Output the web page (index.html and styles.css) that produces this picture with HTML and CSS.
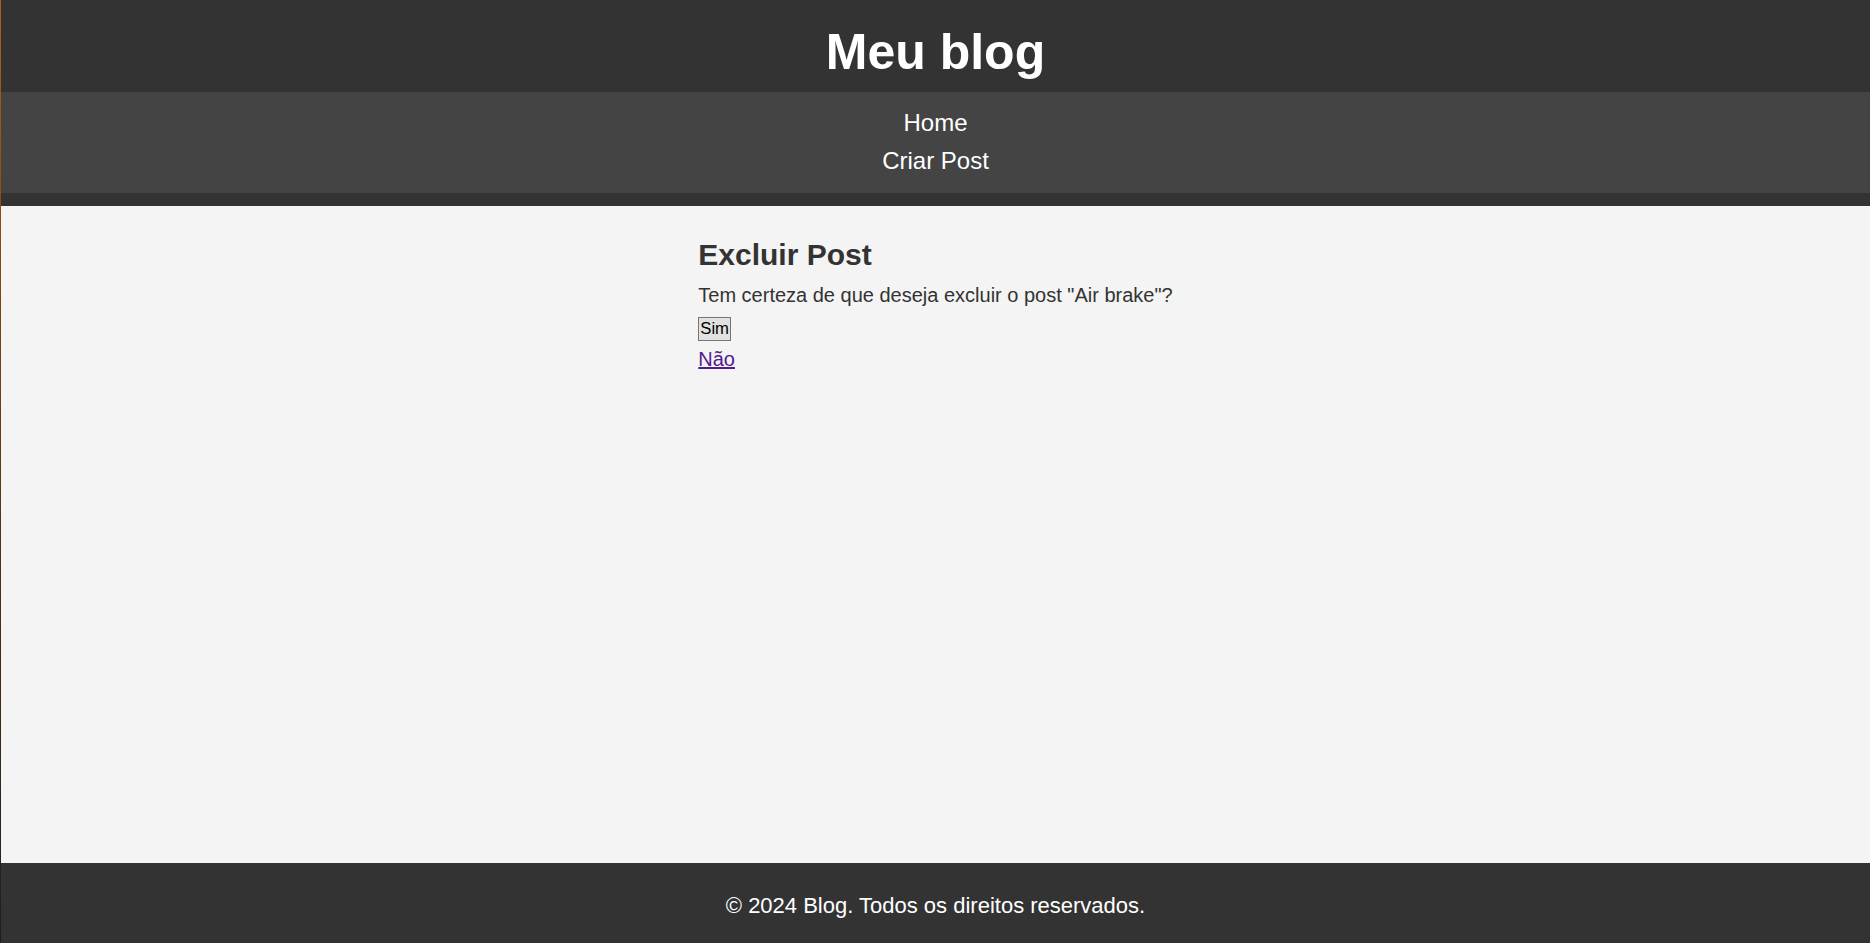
FILE: index.html
```html
<!DOCTYPE html>
<html lang="pt-BR">
<head>
<meta charset="utf-8">
<title>Meu blog</title>
<link rel="stylesheet" href="styles.css">
</head>
<body>
<header class="site-header">
  <h1 class="site-title">Meu blog</h1>
  <nav class="site-nav">
    <ul class="nav-list">
      <li class="nav-item"><a class="nav-link" href="#">Home</a></li>
      <li class="nav-item"><a class="nav-link" href="#">Criar Post</a></li>
    </ul>
  </nav>
</header>
<main class="site-main">
  <div class="content">
    <h2 class="page-title">Excluir Post</h2>
    <p class="confirm-text">Tem certeza de que deseja excluir o post "Air brake"?</p>
    <form class="confirm-form">
      <button class="btn-sim" type="button">Sim</button>
    </form>
    <div class="cancel-row"><a class="cancel-link" href="#">Não</a></div>
  </div>
</main>
<footer class="site-footer">
  <p class="footer-text">© 2024 Blog. Todos os direitos reservados.</p>
</footer>
</body>
</html>
```
FILE: styles.css
```css
html, body {
  margin: 0;
  padding: 0;
}

body {
  min-height: 100vh;
  display: flex;
  flex-direction: column;
  font-family: "Liberation Sans", Arial, sans-serif;
  background: #f4f4f4;
  color: #333;
  border-left: 1px solid #a05a12;
  border-image: linear-gradient(to bottom, #b0620f 0%, #7a4210 35%, #4a2e14 65%, #1e1e1e 100%) 1;
  box-sizing: border-box;
}

.site-header {
  background: #333;
  color: #fff;
  text-align: center;
  padding: 23px 0 13px;
}

.site-title {
  margin: 0 0 11px;
  font-size: 50px;
  line-height: 58px;
  font-weight: bold;
}

.site-nav {
  background: #444;
  padding: 12px 0 13px;
}

.nav-list {
  list-style: none;
  margin: 0;
  padding: 0;
}

.nav-item {
  padding: 5.2px 0;
}

.nav-link {
  color: #fff;
  text-decoration: none;
  font-size: 24px;
  line-height: 27.6px;
}

.site-main {
  flex: 1;
  display: flex;
  flex-direction: column;
  align-items: center;
}

.content {
  width: max-content;
  padding-top: 32px;
}

.page-title {
  margin: 0 0 12px;
  font-size: 30px;
  line-height: 34.5px;
  font-weight: bold;
  color: #333;
}

.confirm-text {
  margin: 0 0 9.5px;
  font-size: 20px;
  line-height: 23px;
}

.confirm-form {
  margin: 0 0 7.5px;
}

.btn-sim {
  display: block;
  margin: 0;
  font-family: "Liberation Sans", Arial, sans-serif;
  font-size: 16.67px;
  line-height: 19px;
  padding: 1.5px 1px;
  color: #000;
  background: #e1e1e1;
  border: 1px solid #767676;
  border-radius: 0;
}

.cancel-row {
  font-size: 20px;
  line-height: 23px;
}

.cancel-link {
  color: #551a8b;
  text-decoration: underline;
}

.site-footer {
  background: #333;
  color: #fff;
  text-align: center;
  padding: 30px 0 25px;
}

.footer-text {
  margin: 0;
  font-size: 22px;
  line-height: 25px;
}
```
